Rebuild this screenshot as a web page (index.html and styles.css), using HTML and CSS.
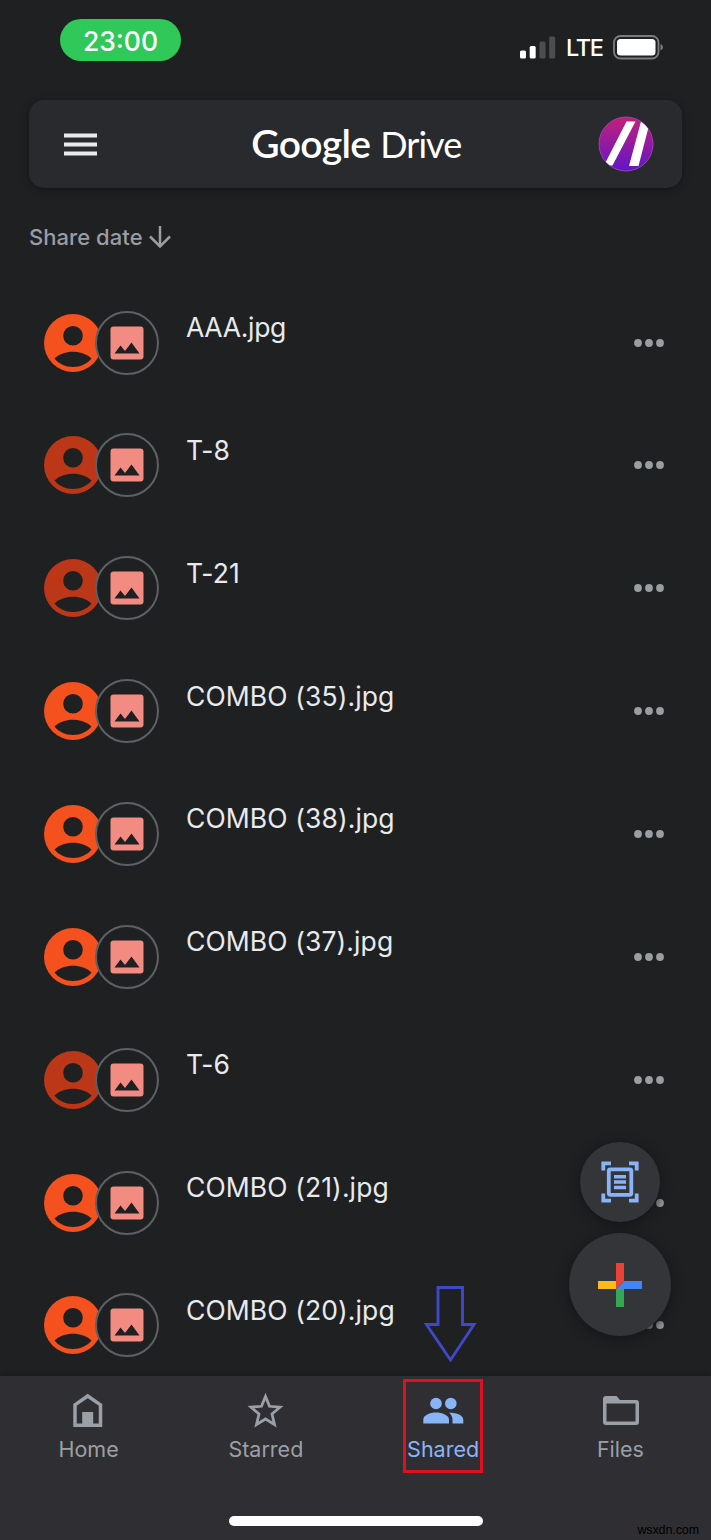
FILE: index.html
```html
<!DOCTYPE html>
<html lang="en">
<head>
<meta charset="utf-8">
<title>Google Drive</title>
<link rel="stylesheet" href="styles.css">
</head>
<body>
<svg class="defs" width="0" height="0" aria-hidden="true">
  <symbol id="person" viewBox="0 0 58 58">
    <path fill="currentColor" fill-rule="evenodd" d="M29 0a29 29 0 1 1 0 58a29 29 0 0 1 0-58zM29 12a9.800 9.800 0 1 0 0 19.600a9.800 9.800 0 0 0 0-19.600zM10.500 44.500C15 50 21.500 53 29 53s14-3 18.500-8.500C43 40 36 37.700 29 37.700S15 40 10.500 44.500z"/>
  </symbol>
  <symbol id="photo" viewBox="0 0 34 34">
    <rect x=".5" y=".5" width="33" height="33" rx="3" fill="#f28b82"/>
    <path fill="#1f2022" d="M4.500 27.500L10.500 19.500l4.500 5.500L21.500 16.500L29.500 27.500z"/>
  </symbol>
  <symbol id="dots" viewBox="0 0 30 8">
    <g fill="#9a9da1"><circle cx="4" cy="4" r="3.900"/><circle cx="15" cy="4" r="3.900"/><circle cx="26" cy="4" r="3.900"/></g>
  </symbol>
</svg>

<div class="screen">
  <header class="status">
    <div class="clock"><span>23:00</span></div>
    <div class="signal">
      <svg width="36" height="24" viewBox="0 0 36 24"><g fill="#fff"><rect x="0" y="14.500" width="6" height="8" rx="1.500"/><rect x="9.700" y="10" width="6" height="12.500" rx="1.500"/></g><g fill="#4d4e50"><rect x="19.500" y="5.500" width="6" height="17" rx="1.500"/><rect x="29.200" y=".5" width="6" height="22" rx="1.500"/></g></svg>
      <span class="lte">LTE</span>
      <svg class="battery" width="51" height="26" viewBox="0 0 51 26"><rect x="1" y="1" width="44.500" height="22.500" rx="6.500" fill="none" stroke="#7b7c7e" stroke-width="1.800"/><rect x="4" y="4" width="38.500" height="16.500" rx="3.500" fill="#fff"/><path d="M47.500 9q2.500.8 2.500 3.300t-2.500 3.300z" fill="#7b7c7e"/></svg>
    </div>
  </header>

  <div class="search">
    <svg width="33" height="23" viewBox="0 0 33 23"><path fill="#e8eaed" d="M0 0.500h33v4H0zM0 9.500h33v4H0zM0 18.500h33v4H0z"/></svg>
    <div class="brand"><span class="google">Google</span><span class="drive">Drive</span></div>
    <svg width="56" height="56" viewBox="0 0 56 56">
      <defs><linearGradient id="avatar" x1="0" y1="0" x2="0" y2="1"><stop offset="0" stop-color="#c41f78"/><stop offset="1" stop-color="#5f17c9"/></linearGradient><clipPath id="round"><circle cx="28" cy="28" r="27"/></clipPath></defs>
      <circle cx="28" cy="28" r="27" fill="url(#avatar)" stroke="#9c3fb0" stroke-width="1"/>
      <path clip-path="url(#round)" fill="#fff" d="M28.500 5.500H37.500L14.500 49.500H6zM43 5.500H52L40.500 50H31z"/>
    </svg>
  </div>

  <div class="sort"><span>Share date</span><svg width="22" height="24" viewBox="0 0 22 24"><path d="M11 1v20M1 11.500l10 10l10-10" fill="none" stroke="#9a9da1" stroke-width="2.500"/></svg></div>

  <main class="list">
    <div class="row"><svg class="person"><use href="#person"/></svg><div class="file"><svg><use href="#photo"/></svg></div><span class="name tight">AAA.jpg</span><svg class="dots"><use href="#dots"/></svg></div>
    <div class="row dim"><svg class="person"><use href="#person"/></svg><div class="file"><svg><use href="#photo"/></svg></div><span class="name">T-8</span><svg class="dots"><use href="#dots"/></svg></div>
    <div class="row dim"><svg class="person"><use href="#person"/></svg><div class="file"><svg><use href="#photo"/></svg></div><span class="name">T-21</span><svg class="dots"><use href="#dots"/></svg></div>
    <div class="row"><svg class="person"><use href="#person"/></svg><div class="file"><svg><use href="#photo"/></svg></div><span class="name">COMBO (35).jpg</span><svg class="dots"><use href="#dots"/></svg></div>
    <div class="row"><svg class="person"><use href="#person"/></svg><div class="file"><svg><use href="#photo"/></svg></div><span class="name">COMBO (38).jpg</span><svg class="dots"><use href="#dots"/></svg></div>
    <div class="row"><svg class="person"><use href="#person"/></svg><div class="file"><svg><use href="#photo"/></svg></div><span class="name">COMBO (37).jpg</span><svg class="dots"><use href="#dots"/></svg></div>
    <div class="row dim"><svg class="person"><use href="#person"/></svg><div class="file"><svg><use href="#photo"/></svg></div><span class="name">T-6</span><svg class="dots"><use href="#dots"/></svg></div>
    <div class="row"><svg class="person"><use href="#person"/></svg><div class="file"><svg><use href="#photo"/></svg></div><span class="name">COMBO (21).jpg</span><svg class="dots"><use href="#dots"/></svg></div>
    <div class="row"><svg class="person"><use href="#person"/></svg><div class="file"><svg><use href="#photo"/></svg></div><span class="name">COMBO (20).jpg</span><svg class="dots"><use href="#dots"/></svg></div>
  </main>

  <nav class="tabs">
    <div class="tab"><svg width="40" height="40" viewBox="0 0 40 40"><path fill="none" stroke="#9aa0a6" stroke-width="3.500" d="M6 34.300V13.800L18.700 5L31.500 13.800V34.300z"/><path fill="#9aa0a6" d="M13.200 21h11v14h-11z"/></svg><span>Home</span></div>
    <div class="tab"><svg width="40" height="40" viewBox="0 0 40 40"><path fill="none" stroke="#9aa0a6" stroke-width="2.800" d="M19.500 5.500L23.500 15.300L34 16.200L26 23L28.500 33.500L19.500 28L10.500 33.500L13 23L5 16.200L15.500 15.300z"/></svg><span>Starred</span></div>
    <div class="tab active"><svg width="44" height="40" viewBox="0 0 44 40"><g fill="#8ab4f8"><circle cx="15" cy="12.500" r="5.800"/><circle cx="29.800" cy="12.500" r="5.800"/><path d="M2.300 32.500V28.500C2.300 24.200 9 21.500 15 21.500s13 2.700 13 7V32.500zM31.500 32.500v-4c0-2.900-1.400-5-3.500-6.700c6.500-.4 14.300 2.300 14.300 6.700V32.500z"/></g></svg><span>Shared</span></div>
    <div class="tab"><svg width="40" height="40" viewBox="0 0 40 40"><path fill="#9aa0a6" fill-rule="evenodd" d="M6 5H16.500L20 9H36a3 3 0 0 1 3 3V31a3 3 0 0 1-3 3H6a3 3 0 0 1-3-3V8a3 3 0 0 1 3-3zM6.500 12.500V30.500H35.500V12.500z"/></svg><span>Files</span></div>
  </nav>

  <div class="fab scan"><svg width="38" height="42" viewBox="0 0 38 42"><g fill="none" stroke="#8ab4f8"><path stroke-width="3.800" d="M2.300 9.500V2.300H10M28 2.300H35.700V9.500M35.700 32.500V39.700H28M10 39.700H2.300V32.500"/><rect x="7.800" y="8.300" width="22.500" height="25.500" rx="1.500" stroke-width="3.800"/><path stroke-width="3.500" d="M13 15.700h12M13 21h12M13 26.500h12"/></g></svg></div>
  <div class="fab add"><svg width="44" height="44" viewBox="0 0 44 44"><path fill="#fbbc1a" d="M0 18h18v8H0z"/><path fill="#34a853" d="M18 26h8v18h-8z"/><path fill="#4285f4" d="M18 26L26 18H44V26z"/><path fill="#ea4335" d="M18 0h8v18L18 26z"/></svg></div>
  <svg class="arrow" width="54" height="80" viewBox="0 0 54 80"><path fill="none" stroke="#3f48c8" stroke-width="2.900" d="M14 3.500H38.500V40.500H50L26.500 76L2.500 40.500H14z"/></svg>
  <div class="frame"></div>
  <div class="home-bar"></div>
  <div class="watermark">wsxdn.com</div>
</div>
</body>
</html>
```
FILE: styles.css
```css
body { margin: 0; background: #1f2022; font-family: Inter, "Liberation Sans", sans-serif; }
.defs { position: absolute; }
svg { display: block; flex: none; }
span { white-space: nowrap; }
.screen { position: relative; width: 711px; height: 1540px; overflow: hidden; display: flex; flex-direction: column; background: #1f2022; }

.status { display: flex; justify-content: space-between; align-items: flex-start; height: 100px; flex: none; box-sizing: border-box; padding: 19px 47px 0 60px; }
.clock { width: 121px; height: 42px; box-sizing: border-box; padding-top: 2px; border-radius: 21px; background: #30c858; color: #fff; display: flex; align-items: center; justify-content: center; font-size: 26.500px; font-weight: 500; }
.signal { display: flex; align-items: center; padding-top: 15px; }
.lte { color: #fff; font-size: 23.500px; font-weight: 500; line-height: 28px; width: 37px; margin: 0 10px; letter-spacing: -1.300px; }

.search { display: flex; align-items: center; justify-content: space-between; margin: 0 29px; height: 88px; flex: none; box-sizing: border-box; padding: 0 28.500px 0 35px; border-radius: 15px; background: #292a2e; box-shadow: 0 2px 7px #141517; }
.brand { display: flex; align-items: baseline; gap: 10px; margin-left: 18px; padding-bottom: 2px; color: #fff; font-family: Lato, sans-serif; font-size: 36px; line-height: 46px; }
.google { font-size: 39px; font-weight: 600; letter-spacing: -0.700px; }
.drive { letter-spacing: -0.950px; }

.sort { display: flex; align-items: flex-start; gap: 6px; height: 93px; flex: none; box-sizing: border-box; padding: 37px 0 0 29px; color: #9a9da1; font-size: 22px; font-weight: 450; line-height: 25px; letter-spacing: 0.050px; }

.list { flex: 1; min-height: 0; overflow: hidden; }
.row { display: flex; align-items: center; height: 122.870px; box-sizing: border-box; padding: 0.200px 47px 0 44px; color: #f4511e; }
.dim { color: #bc3717; }
.person { width: 58px; height: 58px; }
.file { width: 64px; height: 64px; box-sizing: border-box; border: 2px solid #5d6064; border-radius: 50%; margin-left: -7px; background: #1f2022; display: flex; align-items: center; justify-content: center; flex: none; }
.file svg { width: 34px; height: 34px; }
.name { flex: 1; margin-left: 27px; padding-bottom: 31px; color: #e8eaed; font-size: 26.500px; line-height: 32px; letter-spacing: 0.100px; }
.tight { letter-spacing: -0.300px; }
.dots { width: 30px; height: 8px; }

.tabs { display: grid; grid-template-columns: repeat(4, 1fr); height: 164px; flex: none; box-sizing: border-box; padding-right: 2px; background: #2f2e32; box-shadow: 0 0 5px #151618; color: #9aa0a6; }
.tab { display: flex; flex-direction: column; align-items: center; padding-top: 15px; font-size: 21.500px; line-height: 26px; gap: 5px; }
.active { color: #8ab4f8; }

.fab { position: absolute; border-radius: 50%; background: #343538; box-shadow: 0 2px 12px #131416; display: flex; align-items: center; justify-content: center; }
.scan { left: 580px; top: 1142px; width: 80px; height: 80px; }
.add { left: 569px; top: 1233px; width: 102px; height: 103px; }
.arrow { position: absolute; left: 424px; top: 1284px; }
.frame { position: absolute; left: 403px; top: 1379px; width: 80px; height: 94px; box-sizing: border-box; border: 3px solid #e01020; }
.home-bar { position: absolute; left: 229px; top: 1516px; width: 254px; height: 10px; border-radius: 5px; background: #fff; }
.watermark { position: absolute; right: 12px; bottom: 2px; font: 12.500px/16px "Liberation Sans", sans-serif; letter-spacing: -0.100px; color: #000; }
```
